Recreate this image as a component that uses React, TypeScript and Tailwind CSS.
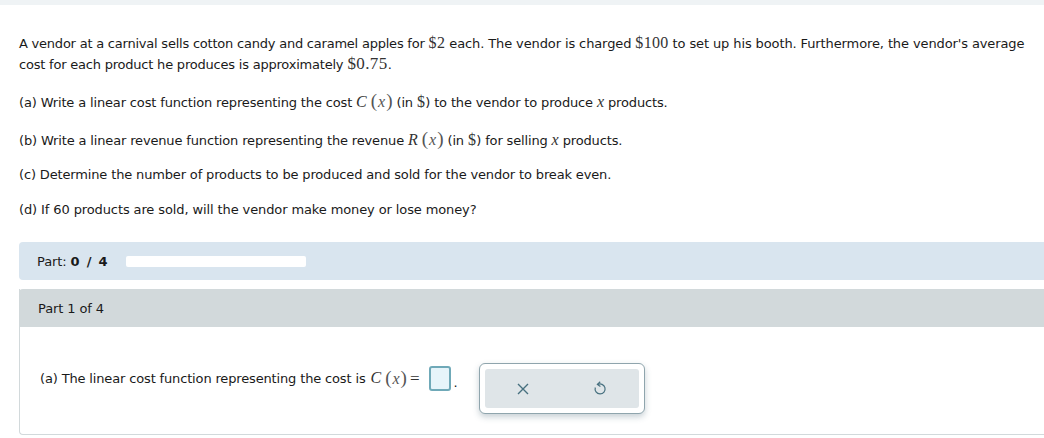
import React from "react";

const Sans = "font-['DejaVu_Sans',Verdana,sans-serif]";

function M({ children, big }: { children: React.ReactNode; big?: boolean }) {
  return (
    <span className={`font-['Liberation_Serif',serif] text-[#333] ${big ? "text-[17px] tracking-[0.4px]" : "text-[16px] tracking-[0.3px]"}`}>{children}</span>
  );
}

function V({ children }: { children: React.ReactNode }) {
  return <span className="font-['Liberation_Serif',serif] italic text-[16px] text-[#333] tracking-normal">{children}</span>;
}

function Paren({ children }: { children: React.ReactNode }) {
  return (
    <span className="font-['Liberation_Serif',serif] text-[#555] tracking-normal">
      <span className="text-[19px] font-light">(</span>
      <span className="italic text-[16px] mx-px">{children}</span>
      <span className="text-[19px] font-light">)</span>
    </span>
  );
}

export default function App() {
  return (
    <div className={`w-[1044px] h-[438px] overflow-hidden bg-white text-[13px] leading-[21px] text-[#1a1a1a] tracking-[-0.11px] ${Sans}`}>
      <div className="h-[5px] bg-[#eff3f5]" />
      <div className="pl-[19px] pt-[27px]">
        <p className="h-[21px] whitespace-nowrap">
          <span className="tracking-[-0.22px]">A vendor at a carnival sells cotton candy and caramel apples for</span> <M>$2</M> each. The vendor is charged <M>$100</M> to set up his booth. Furthermore, the vendor's average
        </p>
        <p className="h-[21px] whitespace-nowrap">
          <span className="tracking-[-0.21px]">cost for each product he produces is approximately</span> <M big>$0.75</M>.
        </p>
        <p className="mt-[16px] h-[21px] whitespace-nowrap tracking-[-0.15px]">
          (a) Write a linear cost function representing the cost <V>C</V> <Paren>x</Paren> (in <M>$</M>) to the vendor to produce <V>x</V> products.
        </p>
        <p className="mt-[17px] h-[21px] whitespace-nowrap tracking-[-0.15px]">
          (b) Write a linear revenue function representing the revenue <V>R</V> <Paren>x</Paren> (in <M>$</M>) for selling <V>x</V> products.
        </p>
        <p className="mt-[15px] h-[21px] whitespace-nowrap tracking-[-0.15px]">
          (c) Determine the number of products to be produced and sold for the vendor to break even.
        </p>
        <p className="mt-[14px] h-[21px] whitespace-nowrap">
          (d) If 60 products are sold, will the vendor make money or lose money?
        </p>

        <div className="mt-[22px] h-[38px] bg-[#d9e5ef] rounded-l-[4px] flex items-center pl-[18px]">
          <span className="w-[89px] whitespace-nowrap">
            Part: <b className="font-bold tracking-[1.3px]">0 / 4</b>
          </span>
          <div className="w-[180px] h-[11px] bg-white rounded-[2px]" />
        </div>

        <div className="mt-[9px] h-[146px] border-b border-l border-[#d2d9db] rounded-bl-[4px]">
          <div className="-ml-px h-[38px] bg-[#d2d9db] rounded-tl-[4px] flex items-center pl-[19px]">Part 1 of 4</div>
          <div className="pl-[20px] pt-[36px] flex items-start">
            <div className="flex items-center h-[30px] whitespace-nowrap">
              <span className="tracking-[-0.15px]">(a) The linear cost function representing the cost is&nbsp;</span>
              <span className="ml-px"><V>C</V></span>
              <span className="ml-[4px]"><Paren>x</Paren></span>
              <span className="font-['Liberation_Serif',serif] text-[17px] text-[#333] ml-[3px]">=</span>
              <span className="ml-[10px] w-[22px] h-[25px] rounded-[3px] border-2 border-[#6fa9b8] bg-[#e6f4fa]" />
              <span className="ml-[2px] self-end mb-[4px] leading-none">.</span>
            </div>
            <div className="ml-[22px] mt-0 w-[166px] h-[51px] rounded-[6px] border border-[#8fa5ad] bg-white p-[5px] shadow-[0_3px_6px_rgba(70,100,115,0.3)]">
              <div className="h-full rounded-[3px] bg-[#dfe5e8] flex items-center pl-[32px] text-[#47707f]">
                <svg width="12" height="12" viewBox="0 0 12 12" fill="none" stroke="currentColor" strokeWidth="1.4">
                  <path d="M1 1 L11 11 M11 1 L1 11" />
                </svg>
                <svg className="ml-[64px]" width="14" height="15" viewBox="0 0 14 15" fill="none" stroke="currentColor" strokeWidth="1.2">
                  <path d="M4.6 3.6 A5 5 0 1 1 2.3 6.5" />
                  <path d="M7.2 0.8 L4.4 3.5 L7.4 5.6" />
                </svg>
              </div>
            </div>
          </div>
        </div>
      </div>
    </div>
  );
}
